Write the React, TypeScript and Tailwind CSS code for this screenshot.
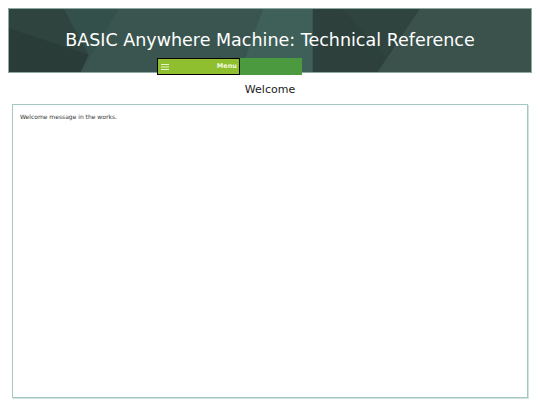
import React from "react"

const HeaderBackdrop = () => (
  <svg
    className="absolute inset-0 h-full w-full"
    viewBox="0 0 524 65"
    preserveAspectRatio="none"
    aria-hidden="true"
  >
    <rect width="524" height="65" fill="#354c47" />
    {/* left facets */}
    <polygon points="0,0 55,0 80,47 72,65 0,65" fill="#2f433f" />
    <polygon points="0,20 80,47 72,65 0,65" fill="#2a3c38" />
    <polygon points="55,0 110,0 72,65 80,47" fill="#34504a" />
    {/* middle facets */}
    <polygon points="110,0 255,0 232,65 72,65" fill="#3a5550" />
    <polygon points="255,0 305,0 305,65 232,65" fill="#3f6058" />
    {/* right facets */}
    <polygon points="305,0 524,0 524,65 305,65" fill="#2d403c" />
    <polygon points="335,0 412,0 378,50" fill="#30443f" />
    <polygon points="412,0 524,0 524,65 370,65" fill="#3a514c" />
  </svg>
)

export default function App() {
  return (
    <div className="w-[540px] h-[405px] bg-white font-['DejaVu_Sans',Verdana,sans-serif] overflow-hidden">
      {/* Header */}
      <div className="pt-2 px-2">
        <header className="relative h-[65px] border border-[#8ea8a2] flex flex-col">
          <HeaderBackdrop />
          <h1 className="relative shrink-0 pt-[19px] text-center text-[17.5px] leading-[24px] text-white">
            BASIC Anywhere Machine: Technical Reference
          </h1>
          <nav className="relative shrink-0 mt-[6px] ml-[148px] flex h-[17px]">
            <button className="flex w-[83px] items-center justify-between border border-black bg-[#8fbe2e] pl-[3px] pr-[2px]">
              <svg width="8" height="6" viewBox="0 0 8 6" aria-hidden="true">
                <rect y="0" width="8" height="1" fill="#e8f3cf" />
                <rect y="2.5" width="8" height="1" fill="#e8f3cf" />
                <rect y="5" width="8" height="1" fill="#e8f3cf" />
              </svg>
              <span className="text-[6.5px] font-bold leading-none text-[#f2f8e4]">Menu</span>
            </button>
            <div className="w-[62px] bg-[#4b9a3f]" />
          </nav>
        </header>
      </div>

      {/* Page title */}
      <h2 className="mt-[9px] text-center text-[11px] leading-[16px] text-[#222]">Welcome</h2>

      {/* Content */}
      <div className="mt-[6px] ml-[12px] w-[516px] h-[294px] border border-[#a3c8c3] shadow-[1px_1px_0_#d3e2df] px-[7px] pt-[7px]">
        <p className="text-[6px] leading-[9px] text-[#333]">Welcome message in the works.</p>
      </div>
    </div>
  )
}
